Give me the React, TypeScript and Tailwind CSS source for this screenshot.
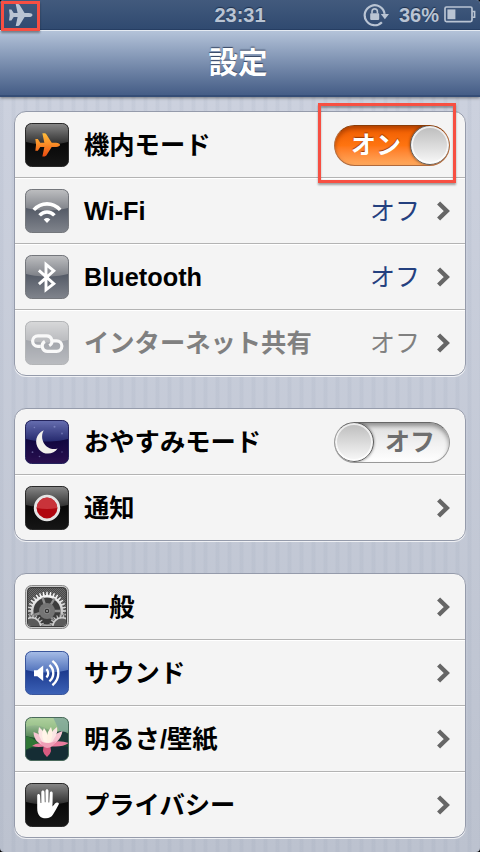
import type { ReactNode } from "react";

const PLANE =
  "M24 11c0 1.2-1.5 2.1-3.8 2.1h-4.1L11 21.2c-.4.5-.9.8-1.6.8H7.2l1.9-8.9H5.2L2.9 16.6H.5L1.2 11 .5 5.4h2.4L5.2 8.9h3.9L7.2 0h2.2c.7 0 1.2.3 1.6.8l5.1 8.1h4.1c2.3 0 3.8.9 3.8 2.1z";

// Outline of a toothed wheel centred on cx, cy
function gearPath(cx: number, cy: number, outer: number, inner: number, teeth: number) {
  const points: string[] = [];
  const step = (Math.PI * 2) / teeth;
  for (let i = 0; i < teeth; i++) {
    const a = i * step;
    const corners: [number, number][] = [
      [inner, a - step * 0.3],
      [outer, a - step * 0.16],
      [outer, a + step * 0.16],
      [inner, a + step * 0.3],
    ];
    corners.forEach(([r, t]) => {
      points.push(`${(cx + r * Math.cos(t)).toFixed(2)},${(cy + r * Math.sin(t)).toFixed(2)}`);
    });
  }
  return `M${points.join("L")}Z`;
}

type TileProps = {
  id: string;
  from: string;
  mid: string;
  low: string;
  to: string;
  border: string;
  faded?: boolean;
  children: ReactNode;
};

function Tile({ id, from, mid, low, to, border, faded, children }: TileProps) {
  return (
    <svg
      viewBox="0 0 44 44"
      className={`w-11 h-11 shrink-0 ${faded ? "opacity-50" : ""}`}
      aria-hidden="true"
    >
      <defs>
        <linearGradient id={`${id}-gloss`} x1="0" y1="0" x2="0" y2="1">
          <stop offset="0" stopColor={from} />
          <stop offset="1" stopColor={mid} />
        </linearGradient>
        <linearGradient id={`${id}-base`} x1="0" y1="0" x2="0" y2="1">
          <stop offset="0.45" stopColor={low} />
          <stop offset="1" stopColor={to} />
        </linearGradient>
        <clipPath id={`${id}-clip`}>
          <rect x="0.5" y="0.5" width="43" height="43" rx="6" />
        </clipPath>
      </defs>
      <g clipPath={`url(#${id}-clip)`}>
        <rect width="44" height="44" fill={`url(#${id}-base)`} />
        <path d="M0 0H44V18.5C34 22.5 10 22.5 0 18.5Z" fill={`url(#${id}-gloss)`} />
        {children}
      </g>
      <rect x="0.5" y="0.5" width="43" height="43" rx="6" fill="none" stroke={border} />
    </svg>
  );
}

const dark = { from: "#8a8a8a", mid: "#2c2c2c", low: "#080808", to: "#161616", border: "#2a2a2a" };
const gray = { from: "#bfc0c2", mid: "#7d8087", low: "#555b67", to: "#81858d", border: "#74777c" };

function AirplaneIcon() {
  return (
    <Tile id="plane" {...dark}>
      <defs>
        <linearGradient id="flame" x1="0" y1="0" x2="0" y2="1">
          <stop offset="0" stopColor="#ffbd3a" />
          <stop offset="0.5" stopColor="#f98a26" />
          <stop offset="1" stopColor="#ea4a10" />
        </linearGradient>
      </defs>
      <path d={PLANE} transform="translate(9.8 10.3) scale(1.05)" fill="url(#flame)" />
    </Tile>
  );
}

function WifiIcon() {
  return (
    <Tile id="wifi" {...gray}>
      <g fill="none" stroke="#fff" strokeWidth="3.6">
        <path d="M8.8 20.9C16.3 12.8 27.7 12.8 35.2 20.9" />
        <path d="M14.6 26.4C18.8 21.8 25.2 21.8 29.4 26.4" />
      </g>
      <path d="M18.7 30.4Q22 27.6 25.3 30.4L22 34Z" fill="#fff" />
    </Tile>
  );
}

function BluetoothIcon() {
  return (
    <Tile id="bluetooth" {...gray}>
      <path
        d="M13.9 15.3L28.8 28.6L21 34.8V9.4L28.8 15.8L13.9 29.2"
        fill="none"
        stroke="#fff"
        strokeWidth="2.9"
      />
    </Tile>
  );
}

function TetheringIcon() {
  return (
    <Tile id="tethering" {...gray} faded>
      <g fill="none" stroke="#fff" strokeWidth="3.2">
        <path d="M15.8 25.4H12.9a5.3 5.3 0 0 1 0-10.6h8.6a5.3 5.3 0 0 1 2.7 9.9" />
        <path d="M27.6 19.8H31.6a5.3 5.3 0 0 1 0 10.6H22.6a5.3 5.3 0 0 1-2.7-9.9" />
      </g>
    </Tile>
  );
}

function MoonIcon() {
  return (
    <Tile id="moon" from="#6870b2" mid="#262a6e" low="#110840" to="#2b1050" border="#24245c">
      <g fill="#a9b0e6" opacity="0.45">
        <circle cx="29.5" cy="6.8" r="1" />
        <circle cx="9.4" cy="7.5" r="0.8" />
        <circle cx="37" cy="13.5" r="0.9" />
        <circle cx="7.5" cy="32.2" r="0.9" />
        <circle cx="14.5" cy="36.5" r="0.8" />
        <circle cx="37" cy="32" r="0.7" />
      </g>
      <path
        d="M18.8 10.3C11 13.4 8.8 23 14 29.4C19.2 35.5 28.6 34.7 32.6 28.5C27.5 30.2 21.7 28 18.9 23.2C16.5 19 16.6 13.9 18.8 10.3Z"
        fill="#f3f1ec"
      />
    </Tile>
  );
}

function NotificationIcon() {
  return (
    <Tile id="notice" {...dark}>
      <circle cx="22" cy="22" r="11.8" fill="#b0060f" stroke="#e4e4e4" strokeWidth="2.8" />
      <path d="M11.6 22A10.4 10.4 0 0 1 32.4 22Q22 24 11.6 22Z" fill="#d2434a" opacity="0.75" />
    </Tile>
  );
}

function GeneralIcon() {
  return (
    <svg viewBox="0 0 44 44" className="w-11 h-11 shrink-0" aria-hidden="true">
      <defs>
        <pattern id="mesh" width="2" height="2" patternUnits="userSpaceOnUse">
          <rect width="2" height="2" fill="#494949" />
          <rect width="1" height="1" fill="#6b6b6b" />
          <rect x="1" y="1" width="1" height="1" fill="#6b6b6b" />
        </pattern>
        <linearGradient id="steel" x1="0" y1="0" x2="0" y2="1">
          <stop offset="0" stopColor="#fff" />
          <stop offset="1" stopColor="#9b9b9b" />
        </linearGradient>
        <clipPath id="general-clip">
          <rect x="3" y="3" width="38" height="38" rx="3" />
        </clipPath>
      </defs>
      <rect x="0.5" y="0.5" width="43" height="43" rx="6" fill="#c9c9c9" stroke="#8b8b8b" />
      <rect x="2.6" y="2.6" width="38.8" height="38.8" rx="3.5" fill="url(#mesh)" stroke="#333" />
      <g clipPath="url(#general-clip)">
        <path d={gearPath(22, 26, 19.3, 16, 32)} fill="url(#steel)" />
        <circle cx="22" cy="26" r="13.6" fill="#3c3c3c" />
        <g stroke="#8e8e8e" strokeWidth="2.4">
          <path d="M22 26L17.5 12.5M22 26L29.5 13.5M22 26H36M22 26L30 38M22 26L9 30" />
        </g>
        <circle cx="22" cy="26" r="8" fill="#747474" />
        <circle cx="22" cy="26" r="2.8" fill="#333" stroke="#999" strokeWidth="0.8" />
        <circle cx="22" cy="26" r="1" fill="#aaa" />
        <path d={gearPath(6.5, 42, 13, 10.3, 22)} fill="#cfcfcf" stroke="#333" strokeWidth="0.4" />
        <path d={gearPath(37, 42, 13, 10.3, 22)} fill="#cfcfcf" stroke="#333" strokeWidth="0.4" />
        <circle cx="6.5" cy="42" r="8.5" fill="#5b5b5b" />
        <circle cx="37" cy="42" r="8.5" fill="#5b5b5b" />
      </g>
    </svg>
  );
}

function SoundIcon() {
  return (
    <Tile id="sound" from="#a9bfe8" mid="#4d6fba" low="#1c3a8e" to="#3d63b8" border="#3a569c">
      <path d="M9 19.3H12.3L18.2 14.5V30L12.3 25.2H9Z" fill="#fff" />
      <g fill="none" stroke="#fff" strokeWidth="2.4">
        <path d="M21.4 18.1A5.5 5.5 0 0 1 21.4 26.3" />
        <path d="M24.4 14A10.6 10.6 0 0 1 24.4 30.4" />
        <path d="M27.4 9.9A15.5 15.5 0 0 1 27.4 34.3" />
      </g>
    </Tile>
  );
}

function WallpaperIcon() {
  return (
    <Tile id="lotus" from="#c3dcb8" mid="#4e8150" low="#1f5030" to="#122b30" border="#4a6a5c">
      <path d="M0 10Q12 6 20 11T44 13V0H0Z" fill="#a4cc8e" opacity="0.6" />
      <path d="M28 0H44V14L36 18Z" fill="#7ca39b" opacity="0.7" />
      <path d="M28 16Q38 12 44 17V26H28Z" fill="#1c3a38" />
      <path d="M0 19Q8 20 14 27L0 33Z" fill="#2f7635" />
      <path d="M0 34Q20 27 44 30V44H0Z" fill="#152d34" />
      <g fill="#e87c9d">
        <path d="M20 27Q32 22 44 26Q36 31 24 29Z" />
        <path d="M20 27Q12 25 7 29Q13 31 22 29Z" />
        <path d="M20 27Q15 34 22 40Q29 34 24 27Z" fill="#d85b80" />
      </g>
      <g fill="#f6c5d1">
        <path d="M22 29Q9 27 8.5 15Q18 17 22 29Z" />
        <path d="M22 29Q35 27 37.5 14Q27 17 22 29Z" />
      </g>
      <g fill="#fbe6e4">
        <path d="M21 29Q11 19 14 10Q22 16 22 29Z" />
        <path d="M23 29Q34 19 32 10Q23 16 22 29Z" />
        <path d="M22 29Q14 19 19 11Q25 18 22 29Z" fill="#fff5e9" />
        <path d="M23 29Q19 19 26 10Q30 19 23 29Z" fill="#fff2e4" />
      </g>
      <path d="M15 24Q23 28 31 24Q28 31 22 31Q17 30 15 24Z" fill="#ef9fb7" />
    </Tile>
  );
}

function PrivacyIcon() {
  return (
    <Tile id="privacy" {...dark}>
      <path
        d="M12.2 25V12.6C12.2 10.4 14.9 10.4 15.1 12.6L15.6 20H16.3V9.4C16.4 7 19.4 7 19.5 9.4L19.8 19.3H20.5V8C20.6 5.7 23.4 5.7 23.5 8V19.4H24.2L24.8 10C25 7.8 27.8 8 27.7 10.3L27.5 23.4C29 22 29.8 20.4 31.2 19.8C32.9 19.2 34.4 20.2 33.7 21.4C31.7 24.9 30 28.4 28 31.5C26.4 34 24.2 35.3 21 35.3C15.2 35.3 12.2 32 12.2 25Z"
        fill="#fff"
      />
    </Tile>
  );
}

function Chevron() {
  return (
    <svg viewBox="0 0 13 20" className="w-[13px] h-5 shrink-0" aria-hidden="true">
      <path d="M1.6 2L9.8 10L1.6 18" fill="none" stroke="#666" strokeWidth="4.4" />
    </svg>
  );
}

function Switch({ on }: { on: boolean }) {
  return (
    <div
      role="switch"
      aria-checked={on}
      className={`w-[116px] h-[41px] shrink-0 rounded-full border flex items-center justify-between overflow-hidden ${
        on
          ? "flex-row border-[#b06a3c] border-t-[#8a3d08] bg-linear-to-b from-[#ee5b00] via-[#ff7410] to-[#ffa95c] pl-4 shadow-[inset_0_3px_4px_rgba(120,40,0,0.5)]"
          : "flex-row-reverse border-[#999] border-t-[#666] bg-linear-to-b from-[#dcdcdc] via-[#f0f0f0] to-white pr-3.5 shadow-[inset_0_3px_4px_rgba(0,0,0,0.35)]"
      }`}
    >
      <span
        className={`text-[25px] leading-[39px] font-bold ${
          on ? "text-white [text-shadow:0_-1px_1px_#9c3800]" : "text-[#6e6e6e]"
        }`}
      >
        {on ? "オン" : "オフ"}
      </span>
      <span className="w-10 h-10 -mx-px shrink-0 rounded-full border border-[#5c5c5c] bg-linear-to-b from-[#bcbcbc] to-[#f9f9f9] shadow-[0_0_3px_rgba(0,0,0,0.5),inset_0_0_0_2px_rgba(255,255,255,0.7)]" />
    </div>
  );
}

type Item = {
  label: string;
  icon: ReactNode;
  value?: string;
  toggle?: boolean;
  disabled?: boolean;
};

const groups: Item[][] = [
  [
    { label: "機内モード", icon: <AirplaneIcon />, toggle: true },
    { label: "Wi-Fi", icon: <WifiIcon />, value: "オフ" },
    { label: "Bluetooth", icon: <BluetoothIcon />, value: "オフ" },
    { label: "インターネット共有", icon: <TetheringIcon />, value: "オフ", disabled: true },
  ],
  [
    { label: "おやすみモード", icon: <MoonIcon />, toggle: false },
    { label: "通知", icon: <NotificationIcon /> },
  ],
  [
    { label: "一般", icon: <GeneralIcon /> },
    { label: "サウンド", icon: <SoundIcon /> },
    { label: "明るさ/壁紙", icon: <WallpaperIcon /> },
    { label: "プライバシー", icon: <PrivacyIcon /> },
  ],
];

function Row({ item }: { item: Item }) {
  return (
    <div className="relative h-[66px] last:h-[65px] flex items-center pl-2.5 pr-[15px] pt-px border-b border-[#b3b3b3] last:border-b-0 shadow-[inset_0_1px_0_#fff] first:shadow-none">
      {item.icon}
      <span
        className={`ml-[15px] text-[25.3px] leading-8 font-bold whitespace-nowrap ${
          item.disabled ? "text-[#808080]" : "text-black"
        }`}
      >
        {item.label}
      </span>
      <div className="ml-auto flex items-center">
        {item.value && (
          <span
            className={`mr-[17px] text-[25px] leading-8 font-normal ${
              item.disabled ? "text-[#808080]" : "text-[#24407f]"
            }`}
          >
            {item.value}
          </span>
        )}
        {item.toggle === undefined ? <Chevron /> : <Switch on={item.toggle} />}
      </div>
      {item.toggle && (
        <div className="absolute left-[303px] -top-[9px] w-[138px] h-20 border-3 border-[#f74f42] shadow-[0_2px_2px_rgba(0,0,0,0.35),inset_0_2px_2px_rgba(0,0,0,0.3)] z-10" />
      )}
    </div>
  );
}

function StatusBar() {
  return (
    <div className="relative h-[30px] grid grid-cols-3 items-center pl-2 pr-1 bg-linear-to-b from-[#425a7d] to-[#304a70] border-b border-[#263e63] text-[#b9c4d3] text-[20px] font-bold [text-shadow:0_-1px_1px_#1d2f4b]">
      <svg viewBox="0 0 24 22" className="w-[25px] h-[22px]" fill="#b9c4d3" aria-hidden="true">
        <path d={PLANE} />
      </svg>
      <span className="text-center leading-7 -ml-1">23:31</span>
      <div className="flex items-center justify-end">
        <svg viewBox="0 0 26 24" className="w-[26px] h-6 mr-2.5" aria-hidden="true">
          <path
            d="M18.9 19.2A10 10 0 1 1 21.6 10.8"
            fill="none"
            stroke="#b9c4d3"
            strokeWidth="2.2"
          />
          <path d="M17.8 11H26L21.9 16.2Z" fill="#b9c4d3" />
          <rect x="7.2" y="10.3" width="9" height="6.6" rx="0.8" fill="#b9c4d3" />
          <path d="M9 10.5V8.6a2.7 2.7 0 0 1 5.4 0v1.9" fill="none" stroke="#b9c4d3" strokeWidth="1.6" />
        </svg>
        <span className="leading-7">36%</span>
        <svg viewBox="0 0 32 17" className="w-8 h-[17px] ml-[5px]" aria-hidden="true">
          <rect x="1" y="1" width="27" height="14.6" rx="1.5" fill="none" stroke="#b9c4d3" strokeWidth="1.7" />
          <rect x="3.4" y="3.4" width="8" height="9.8" fill="#b9c4d3" />
          <path d="M28.4 5.5H30.6V11.2H28.4" fill="none" stroke="#b9c4d3" strokeWidth="1.6" />
        </svg>
      </div>
      <div className="absolute left-px top-px w-[39px] h-[30px] border-3 border-[#f74f42] shadow-[0_2px_2px_rgba(0,0,0,0.35)] z-10" />
    </div>
  );
}

export default function App() {
  return (
    <div className="w-[480px] h-[852px] overflow-hidden bg-black font-['Liberation_Sans','Noto_Sans_CJK_JP',sans-serif]">
      <div className="h-full rounded-[4px] overflow-hidden bg-[repeating-linear-gradient(90deg,rgba(80,100,130,0.05)_0_3px,transparent_4px_11px,rgba(80,100,130,0.05)_12px),linear-gradient(to_bottom,#ced3e0,#bcc2cf)]">
        <StatusBar />
        <header className="h-[67px] flex items-center justify-center bg-linear-to-b from-[#b4c3d9] to-[#455d86] border-t border-t-[#e4eaf2] border-b-2 border-b-[#354d76] shadow-[0_1px_3px_rgba(0,0,0,0.45)]">
          <h1 className="-ml-1 text-[29.5px] leading-[60px] font-bold text-white [text-shadow:0_-1px_1px_rgba(30,45,75,0.8)]">
            設定
          </h1>
        </header>

        <main className="px-3.5 pt-3.5 flex flex-col gap-8">
          {groups.map((group, i) => (
            <section
              key={i}
              className="rounded-[12px] border border-[#959bab] bg-[#f4f4f4] shadow-[0_1px_0_rgba(255,255,255,0.75)]"
            >
              {group.map((item) => (
                <Row key={item.label} item={item} />
              ))}
            </section>
          ))}
        </main>
      </div>
    </div>
  );
}
